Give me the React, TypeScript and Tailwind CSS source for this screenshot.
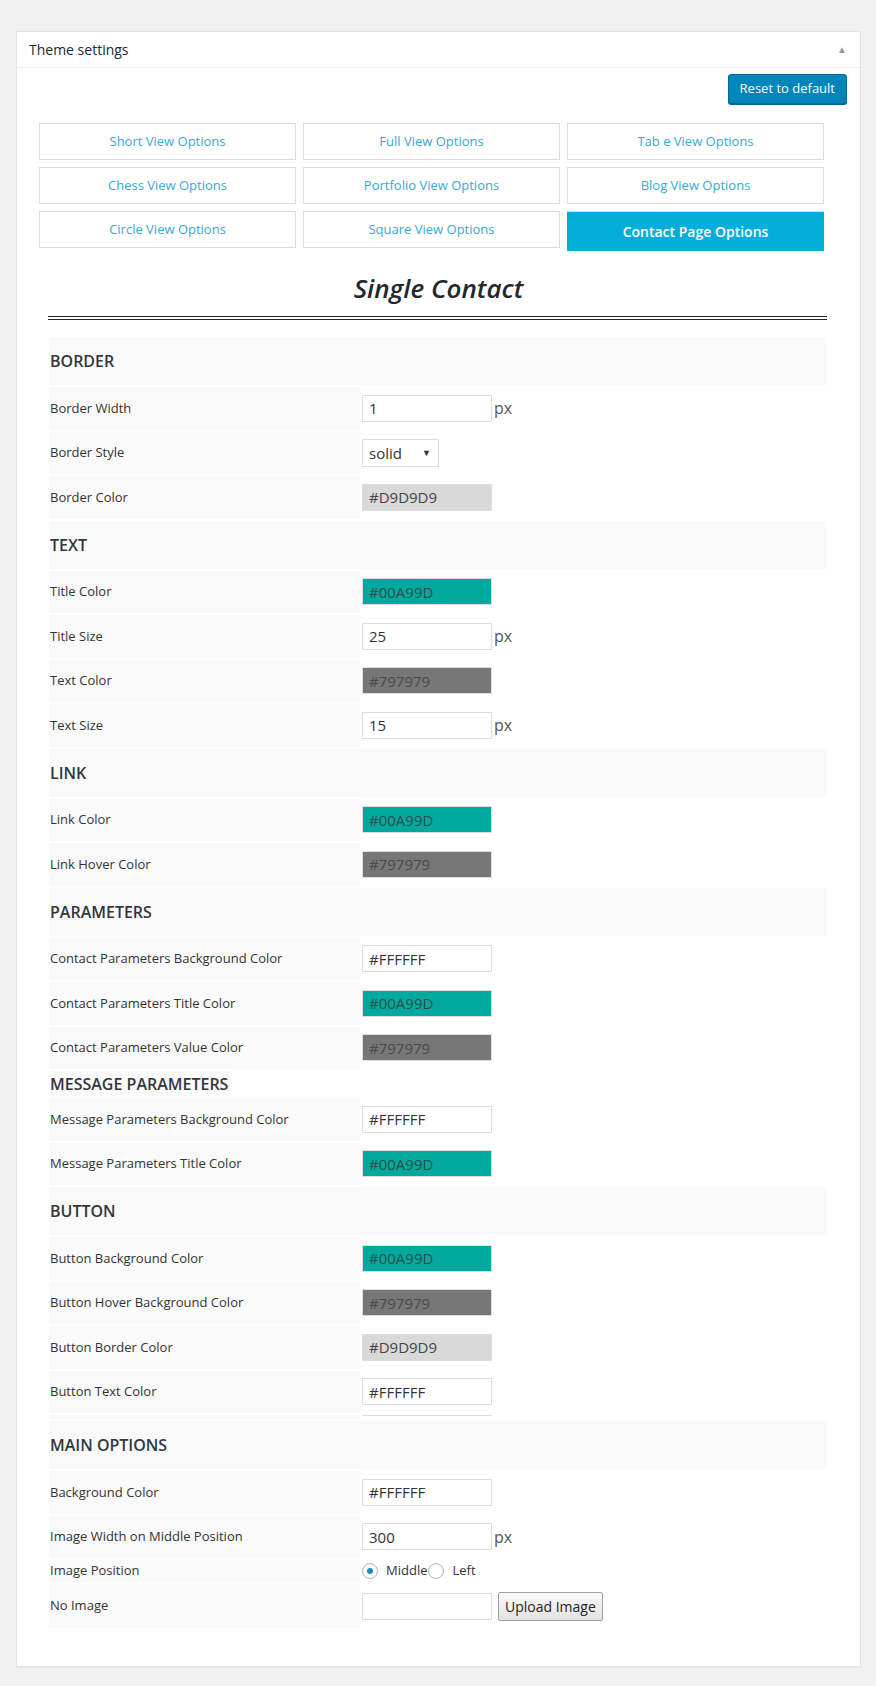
import React from "react";

const font = "font-['Open_Sans','Noto_Sans',sans-serif]";

type Row =
  | { kind: "header"; title: string }
  | { kind: "sub"; title: string }
  | { kind: "text"; label: string; value: string; px?: boolean }
  | { kind: "color"; label: string; value: string }
  | { kind: "select"; label: string; value: string }
  | { kind: "radio"; label: string }
  | { kind: "upload"; label: string }
  | { kind: "spacer" };

const ROWS: Row[] = [
  { kind: "header", title: "BORDER" },
  { kind: "text", label: "Border Width", value: "1", px: true },
  { kind: "select", label: "Border Style", value: "solid" },
  { kind: "color", label: "Border Color", value: "#D9D9D9" },
  { kind: "header", title: "TEXT" },
  { kind: "color", label: "Title Color", value: "#00A99D" },
  { kind: "text", label: "Title Size", value: "25", px: true },
  { kind: "color", label: "Text Color", value: "#797979" },
  { kind: "text", label: "Text Size", value: "15", px: true },
  { kind: "header", title: "LINK" },
  { kind: "color", label: "Link Color", value: "#00A99D" },
  { kind: "color", label: "Link Hover Color", value: "#797979" },
  { kind: "header", title: "PARAMETERS" },
  { kind: "color", label: "Contact Parameters Background Color", value: "#FFFFFF" },
  { kind: "color", label: "Contact Parameters Title Color", value: "#00A99D" },
  { kind: "color", label: "Contact Parameters Value Color", value: "#797979" },
  { kind: "sub", title: "MESSAGE PARAMETERS" },
  { kind: "color", label: "Message Parameters Background Color", value: "#FFFFFF" },
  { kind: "color", label: "Message Parameters Title Color", value: "#00A99D" },
  { kind: "header", title: "BUTTON" },
  { kind: "color", label: "Button Background Color", value: "#00A99D" },
  { kind: "color", label: "Button Hover Background Color", value: "#797979" },
  { kind: "color", label: "Button Border Color", value: "#D9D9D9" },
  { kind: "color", label: "Button Text Color", value: "#FFFFFF" },
  { kind: "spacer" },
  { kind: "header", title: "MAIN OPTIONS" },
  { kind: "color", label: "Background Color", value: "#FFFFFF" },
  { kind: "text", label: "Image Width on Middle Position", value: "300", px: true },
  { kind: "radio", label: "Image Position" },
  { kind: "upload", label: "No Image" },
];

const TABS = [
  "Short View Options",
  "Full View Options",
  "Tab e View Options",
  "Chess View Options",
  "Portfolio View Options",
  "Blog View Options",
  "Circle View Options",
  "Square View Options",
  "Contact Page Options",
];

const colorClass = (value: string) => {
  if (value === "#00A99D") return "bg-[#00a99d] text-[#2f4f4c]";
  if (value === "#797979") return "bg-[#777777] text-[#4a4a4a]";
  if (value === "#D9D9D9") return "bg-[#d9d9d9] text-[#444]";
  return "bg-white text-[#333]";
};

const Px = () => <span className="ml-[2px] text-[16px] text-[#555]">px</span>;

const LabelCell = ({ label, children, h = "h-[42.5px]" }: { label: string; children: React.ReactNode; h?: string }) => (
  <div className={`flex ${h} gap-[2px]`}>
    <div className="flex w-[311px] items-center bg-[#fafafa] pl-[1px] text-[13px] text-[#333]">{label}</div>
    <div className="flex flex-1 items-center">{children}</div>
  </div>
);

const RowView = ({ row }: { row: Row }) => {
  switch (row.kind) {
    case "header":
      return (
        <div className="flex h-[48px] items-center bg-[#fafafa] pl-[1px] text-[16px] font-semibold text-[#32373c]">
          {row.title}
        </div>
      );
    case "sub":
      return (
        <div className="flex h-[25px]">
          <div className="flex items-center bg-[#fafafa] pl-[1px] pr-[2px] text-[16px] font-semibold text-[#32373c]">
            {row.title}
          </div>
        </div>
      );
    case "text":
      return (
        <LabelCell label={row.label}>
          <div className="flex h-[27px] w-[130px] items-center border border-[#ddd] bg-white pl-[6px] text-[15px] text-[#333]">
            {row.value}
          </div>
          {row.px && <Px />}
        </LabelCell>
      );
    case "color":
      return (
        <LabelCell label={row.label}>
          <div
            className={`flex h-[27px] w-[130px] items-center border border-[#ddd] pl-[6px] text-[15px] ${colorClass(row.value)}`}
          >
            {row.value}
          </div>
        </LabelCell>
      );
    case "select":
      return (
        <LabelCell label={row.label}>
          <div className="flex h-[28px] w-[77px] items-center justify-between border border-[#ddd] bg-white pl-[6px] pr-[7px] text-[15px] text-[#333]">
            <span>{row.value}</span>
            <span className="text-[9px] text-[#333]">▼</span>
          </div>
        </LabelCell>
      );
    case "radio":
      return (
        <LabelCell label={row.label} h="h-[22px]">
          <div className="flex items-center text-[13px] text-[#333]">
            <span className="flex h-[16px] w-[16px] items-center justify-center rounded-full border border-[#b4b9be] bg-white shadow-[inset_0_1px_2px_rgba(0,0,0,0.07)]">
              <span className="h-[6px] w-[6px] rounded-full bg-[#1e8cbe]" />
            </span>
            <span className="ml-[8px]">Middle</span>
            <span className="ml-[1px] h-[16px] w-[16px] rounded-full border border-[#b4b9be] bg-white shadow-[inset_0_1px_2px_rgba(0,0,0,0.07)]" />
            <span className="ml-[8px]">Left</span>
          </div>
        </LabelCell>
      );
    case "upload":
      return (
        <LabelCell label={row.label} h="h-[44px]">
          <div className="h-[27px] w-[130px] border border-[#ddd] bg-white" />
          <button className="ml-[6px] h-[29px] rounded-[2px] border border-[#a0a0a0] bg-gradient-to-b from-[#fafafa] to-[#e2e2e2] px-[6px] text-[14px] text-[#222]">
            Upload Image
          </button>
        </LabelCell>
      );
    case "spacer":
      return (
        <div className="flex h-[4px] gap-[2px]">
          <div className="w-[311px] bg-[#fafafa]" />
          <div className="flex-1">
            <div className="h-px w-[130px] bg-[#ddd]" />
          </div>
        </div>
      );
  }
};

export default function App() {
  return (
    <div className={`min-h-[1686px] bg-[#f1f1f1] pl-[16px] pr-[15px] pt-[31px] ${font}`}>
      <div className="border border-[#e5e5e5] bg-white shadow-[0_1px_1px_rgba(0,0,0,0.04)]">
        <div className="flex h-[36px] items-center justify-between border-b border-[#eee] pl-[12px] pr-[13px]">
          <span className="text-[14px] text-[#23282d]">Theme settings</span>
          <span className="text-[10px] text-[#999]">▲</span>
        </div>

        <div className="flex justify-end pr-[13px] pt-[6px]">
          <button className="h-[30px] rounded-[3px] border border-[#006799] bg-[#0085ba] px-[11px] text-[13px] text-white shadow-[0_1px_0_#006799]">
            Reset to default
          </button>
        </div>

        <div className="ml-[22px] mr-[36px] mt-[19px] grid grid-cols-3 items-start gap-x-[7px] gap-y-[7px]">
          {TABS.map((t) =>
            t === "Contact Page Options" ? (
              <div
                key={t}
                className="flex h-[40px] items-center justify-center border-t border-[#ddd] bg-[#03aedb] text-[14px] font-semibold text-white"
              >
                {t}
              </div>
            ) : (
              <div
                key={t}
                className="flex h-[37px] items-center justify-center border border-[#ddd] bg-white text-[13px] text-[#3ba8d1]"
              >
                {t}
              </div>
            )
          )}
        </div>

        <div className="mt-[19px] text-center text-[26px] font-semibold italic leading-[36px] text-[#23282d]">
          Single Contact
        </div>

        <div className="ml-[31px] mr-[33px] mt-[10px]">
          <div className="h-px bg-[#23282d]" />
          <div className="mt-[2px] h-px bg-[#23282d]" />
        </div>

        <div className="ml-[32px] mr-[33px] mt-[17px] flex flex-col gap-[2px] pb-[38px]">
          {ROWS.map((r, i) => (
            <RowView key={i} row={r} />
          ))}
        </div>
      </div>
    </div>
  );
}
